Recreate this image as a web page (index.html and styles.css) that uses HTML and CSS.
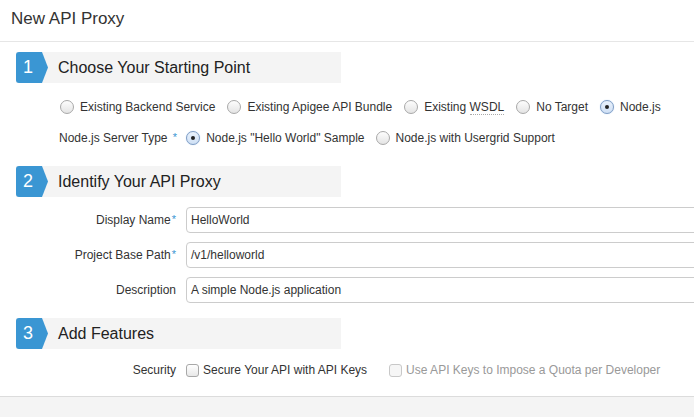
FILE: index.html
```html
<!DOCTYPE html>
<html>
<head>
<meta charset="utf-8">
<link rel="stylesheet" href="styles.css">
</head>
<body>
<div class="page">
  <header class="topbar"><h1 class="title">New API Proxy</h1></header>
  <main class="content">
    <div class="step-head s1"><span class="badge">1</span><span class="step-title">Choose Your Starting Point</span></div>
    <div class="opt-row r1">
      <label class="opt"><span class="radio"></span><span>Existing Backend Service</span></label>
      <label class="opt"><span class="radio"></span><span>Existing Apigee API Bundle</span></label>
      <label class="opt"><span class="radio"></span><span>Existing <span class="dotted">WSDL</span></span></label>
      <label class="opt"><span class="radio"></span><span>No Target</span></label>
      <label class="opt"><span class="radio on"></span><span>Node.js</span></label>
    </div>
    <div class="opt-row r2">
      <span class="inline-label">Node.js Server Type <span class="req">*</span></span>
      <label class="opt"><span class="radio on"></span><span>Node.js "Hello World" Sample</span></label>
      <label class="opt"><span class="radio"></span><span>Node.js with Usergrid Support</span></label>
    </div>

    <div class="step-head s2"><span class="badge">2</span><span class="step-title">Identify Your API Proxy</span></div>
    <div class="field f1"><span class="flabel">Display Name<span class="req">*</span></span><div class="input">HelloWorld</div></div>
    <div class="field"><span class="flabel">Project Base Path<span class="req">*</span></span><div class="input">/v1/helloworld</div></div>
    <div class="field"><span class="flabel">Description</span><div class="input">A simple Node.js application</div></div>

    <div class="step-head s3"><span class="badge">3</span><span class="step-title">Add Features</span></div>
    <div class="field sec">
      <span class="flabel">Security</span>
      <div class="checks">
        <label class="chk"><span class="cbox"></span><span>Secure Your API with API Keys</span></label>
        <label class="chk disabled"><span class="cbox"></span><span>Use API Keys to Impose a Quota per Developer</span></label>
      </div>
    </div>
  </main>
  <footer class="footer"></footer>
</div>
</body>
</html>
```

FILE: styles.css
```css
* { box-sizing: border-box; }
html, body { margin: 0; padding: 0; }
body {
  width: 694px;
  height: 417px;
  overflow: hidden;
  background: #fff;
  font-family: "Liberation Sans", Arial, sans-serif;
  color: #333;
  font-size: 12px;
}
.page { display: flex; flex-direction: column; height: 417px; }
.topbar {
  height: 42px;
  border-bottom: 1px solid #e6e6e6;
  padding: 0 11px;
  display: flex;
  align-items: center;
}
.title {
  margin: 0 0 3px 0;
  font-weight: normal;
  font-size: 17px;
  color: #333;
}
.content { padding-left: 16px; }
.step-head {
  width: 325px;
  height: 31px;
  background: #f4f4f4;
  display: flex;
  align-items: center;
}
.s1 { margin-top: 10px; }
.s2 { margin-top: 18px; }
.s3 { margin-top: 15px; }
.badge {
  width: 32px;
  height: 31px;
  background: #3a96d3;
  color: #fff;
  font-size: 18px;
  display: flex;
  align-items: center;
  padding-left: 7px;
  border-radius: 3px 0 0 3px;
  clip-path: polygon(0 0, 26px 0, 32px 50%, 26px 100%, 0 100%);
}
.step-title {
  margin-left: 10px;
  font-size: 16px;
  color: #222;
}
.opt-row { display: flex; align-items: center; height: 20px; }
.r1 { margin-top: 14px; padding-left: 44px; gap: 12px; }
.r2 { margin-top: 11px; padding-left: 43px; }
.r2 .opt { margin-right: 11px; }
.opt { display: flex; align-items: center; white-space: nowrap; }
.radio {
  width: 14px;
  height: 14px;
  border-radius: 50%;
  border: 1px solid #a8a8a8;
  background: linear-gradient(#fdfdfd, #e4e4e4);
  margin-right: 6px;
  display: inline-flex;
  align-items: center;
  justify-content: center;
  flex: none;
}
.radio.on {
  border-color: #7d9cc4;
  background: linear-gradient(#eaf2fc, #cfe0f5);
  box-shadow: 0 0 1px #9cc0ee;
}
.radio.on::after {
  content: "";
  width: 4px;
  height: 4px;
  border-radius: 50%;
  background: #222;
}
.dotted { border-bottom: 1px dotted #aaa; }
.inline-label { margin-right: 9px; white-space: nowrap; }
.req { color: #3a96d3; font-size: 11px; vertical-align: top; margin-left: 2px; }
.field { display: flex; align-items: center; margin-top: 9px; }
.f1 { margin-top: 10px; }
.flabel {
  width: 160px;
  flex: none;
  text-align: right;
  white-space: nowrap;
}
.flabel .req { margin-left: 1px; }
.input {
  margin-left: 10px;
  flex: none;
  width: 540px;
  height: 26px;
  border: 1px solid #ccc;
  border-radius: 4px;
  padding: 0 4px;
  display: flex;
  align-items: center;
  color: #333;
}
.sec { margin-top: 11px; height: 20px; }
.checks { display: flex; margin-left: 10px; align-items: center; }
.chk { display: flex; align-items: center; white-space: nowrap; margin-right: 22px; }
.chk.disabled { color: #999; }
.cbox {
  width: 13px;
  height: 13px;
  border: 1px solid #a8a8a8;
  border-radius: 3px;
  background: linear-gradient(#fff, #e8e8e8);
  margin-right: 4px;
  flex: none;
}
.disabled .cbox { border-color: #c8c8c8; background: #f6f6f6; }
.footer {
  margin-top: auto;
  height: 21px;
  background: #f4f4f4;
  border-top: 1px solid #dcdcdc;
}
```
